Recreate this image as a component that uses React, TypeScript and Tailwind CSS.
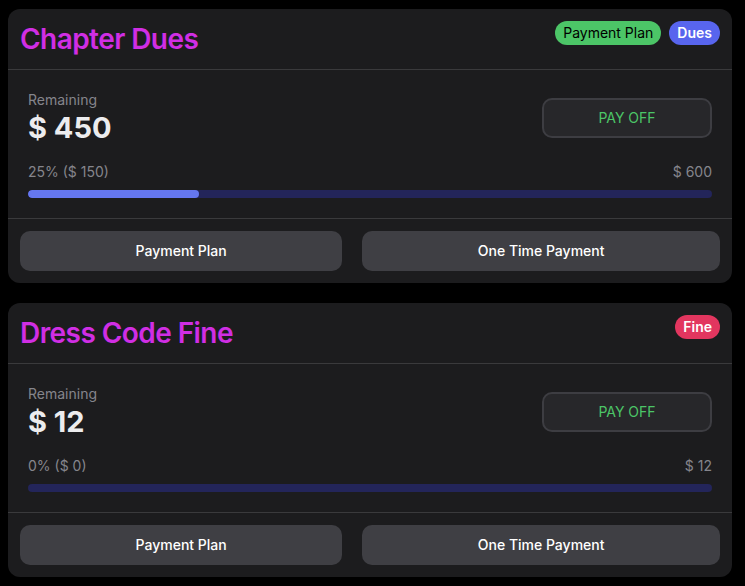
type Due = {
  title: string;
  badges: { label: string; className: string }[];
  remaining: number;
  paid: number;
  total: number;
};

const dues: Due[] = [
  {
    title: "Chapter Dues",
    badges: [
      { label: "Payment Plan", className: "bg-[#4cc567] text-black" },
      { label: "Dues", className: "bg-[#5865ee] text-white font-semibold" },
    ],
    remaining: 450,
    paid: 150,
    total: 600,
  },
  {
    title: "Dress Code Fine",
    badges: [{ label: "Fine", className: "bg-[#e2365f] text-white font-semibold" }],
    remaining: 12,
    paid: 0,
    total: 12,
  },
];

function DueCard({ due }: { due: Due }) {
  const pct = Math.round((due.paid / due.total) * 100);
  return (
    <div className="rounded-xl bg-[#1c1c1e] overflow-hidden">
      <div className="flex items-start justify-between px-3 py-3 border-b border-[#3a3a3c]">
        <h1 className="text-[28px] leading-9 font-semibold tracking-[-0.02em] text-[#d02ee4]">{due.title}</h1>
        <div className="flex gap-2">
          {due.badges.map((b) => (
            <span key={b.label} className={`h-6 px-2 rounded-full text-sm leading-6 ${b.className}`}>
              {b.label}
            </span>
          ))}
        </div>
      </div>

      <div className="px-5 pt-5 pb-5 border-b border-[#3a3a3c]">
        <div className="flex items-center justify-between">
          <div>
            <p className="text-sm leading-5 text-[#85858c]">Remaining</p>
            <p className="text-[29px] leading-9 font-bold text-[#ececee]">$ {due.remaining}</p>
          </div>
          <button className="w-[170px] h-10 rounded-[10px] border-2 border-[#3d3d42] bg-[#27272a] text-sm text-[#4cc567]">
            PAY OFF
          </button>
        </div>
        <div className="mt-4 flex justify-between text-sm leading-5 text-[#85858c]">
          <span>
            {pct}% ($ {due.paid})
          </span>
          <span>$ {due.total}</span>
        </div>
        <div className="mt-2 h-2 rounded-full bg-[#23255a] overflow-hidden">
          <div className="h-full rounded-full bg-[#6577f0]" style={{ width: `${pct}%` }} />
        </div>
      </div>

      <div className="flex gap-5 p-3">
        <button className="flex-auto h-10 rounded-[10px] bg-[#3f3f44] text-sm font-medium text-white">Payment Plan</button>
        <button className="flex-auto h-10 rounded-[10px] bg-[#3f3f44] text-sm font-medium text-white">One Time Payment</button>
      </div>
    </div>
  );
}

export default function App() {
  return (
    <div className="min-h-screen bg-black pl-2 pr-[13px] pt-[9px] pb-2 font-['Inter',sans-serif]">
      <div className="flex flex-col gap-5">
        {dues.map((d) => (
          <DueCard key={d.title} due={d} />
        ))}
      </div>
    </div>
  );
}
